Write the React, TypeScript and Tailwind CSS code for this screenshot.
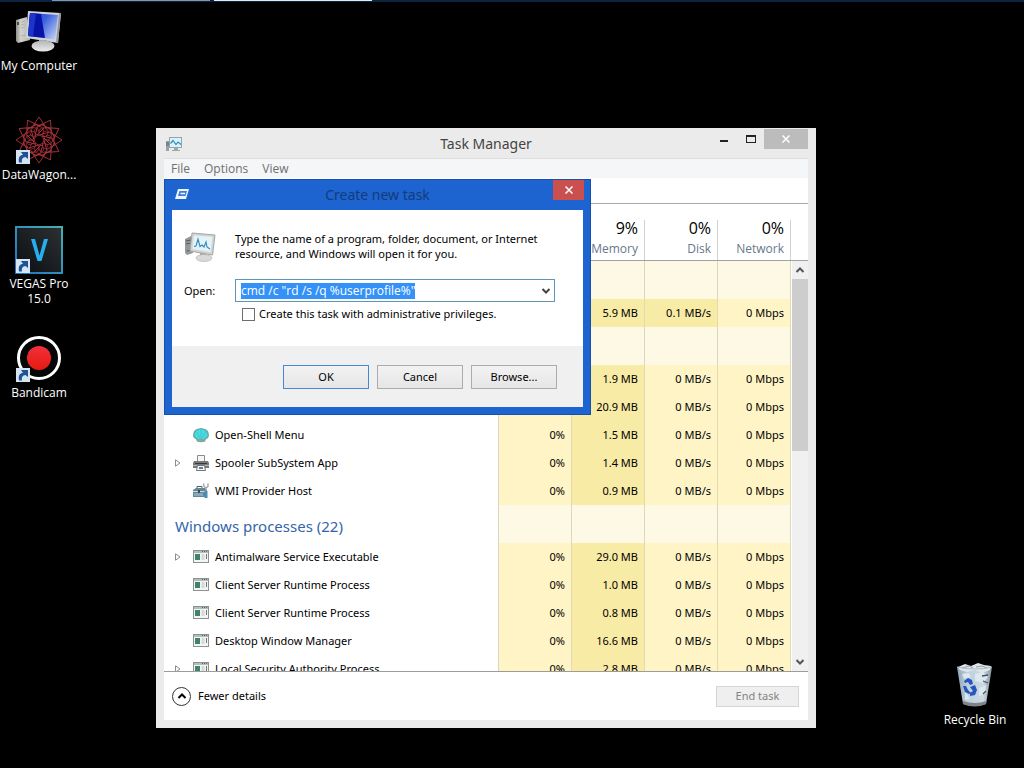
import { FC, ReactNode, useEffect, useRef } from "react";

interface Row {
  name: string;
  group?: boolean;
  expandable?: boolean;
  icon?: "shell" | "printer" | "wmi" | "window";
  cpu?: string;
  memory?: string;
  disk?: string;
  network?: string;
}

const rows: Row[] = [
  { name: "", group: true },
  { name: "", memory: "5.9 MB", disk: "0.1 MB/s" },
  { name: "", group: true },
  { name: "", memory: "1.9 MB" },
  { name: "", memory: "20.9 MB" },
  { name: "Open-Shell Menu", icon: "shell", cpu: "0%", memory: "1.5 MB" },
  { name: "Spooler SubSystem App", icon: "printer", expandable: true, cpu: "0%", memory: "1.4 MB" },
  { name: "WMI Provider Host", icon: "wmi", cpu: "0%", memory: "0.9 MB" },
  { name: "Windows processes (22)", group: true },
  { name: "Antimalware Service Executable", icon: "window", expandable: true, cpu: "0%", memory: "29.0 MB" },
  { name: "Client Server Runtime Process", icon: "window", cpu: "0%", memory: "1.0 MB" },
  { name: "Client Server Runtime Process", icon: "window", cpu: "0%", memory: "0.8 MB" },
  { name: "Desktop Window Manager", icon: "window", cpu: "0%", memory: "16.6 MB" },
  { name: "Local Security Authority Process", icon: "window", expandable: true, cpu: "0%", memory: "2.8 MB" },
];

const ComputerIcon = () => (
  <svg viewBox="0 0 48 48" className="size-12">
    <defs>
      <linearGradient id="screen" x1="0" y1="0.2" x2="1" y2="0.9">
        <stop offset="0" stopColor="#1a3fd0" />
        <stop offset="0.4" stopColor="#3c60dc" />
        <stop offset="1" stopColor="#c4d3f7" />
      </linearGradient>
      <linearGradient id="tower" x1="0" y1="0" x2="1" y2="0">
        <stop offset="0" stopColor="#8f8f8b" />
        <stop offset="0.35" stopColor="#d4d4cf" />
        <stop offset="1" stopColor="#b4b4af" />
      </linearGradient>
      <linearGradient id="stand" x1="0" y1="0" x2="0" y2="1">
        <stop offset="0" stopColor="#b3b5b6" />
        <stop offset="1" stopColor="#eceded" />
      </linearGradient>
    </defs>
    <path d="M1 12 L12 9 L15 32 L3 35 L1 33 Z" fill="url(#tower)" />
    <path d="M2 14h2v3H2z" fill="#4c4c49" />
    <path d="M6 14l4-1M6 17l4-1M6 20l4-1M6 28l5-1" stroke="#a5a5a0" strokeWidth=".7" />
    <path d="M13 3 L46 5 L43 35 L11 30 Z" fill="#cfd3d8" />
    <path d="M43 35 L46 5 L44 5 L41 34.600 Z" fill="#92979d" />
    <path d="M15 5 L43 7 L40 31.500 L13 28 Z" fill="url(#screen)" />
    <path d="M15 5 L26 6 L30 30 L13 28 Z" fill="#0712a8" />
    <path d="M15 5 L21 5.500 L18 28.500 L13 28 Z" fill="#1c35c8" />
    <path d="M24 32h8v5h-8z" fill="#a4a7a9" />
    <ellipse cx="28" cy="38" rx="11.500" ry="5.500" fill="url(#stand)" />
  </svg>
);

const ShortcutArrow = () => (
  <>
    <rect x="1" y="33" width="14" height="14" fill="#d6e4f2" />
    <path d="M4 45.500 C3 40 5 38 8 38 L6 35 L13 35 L13 42 L10.500 40 C7.500 40.500 6.500 42 7 45.500 Z" fill="#1f5296" />
  </>
);

const DataWagonIcon = () => (
  <svg viewBox="0 0 48 48" className="size-12" fill="none">
    {[0, 30, 60, 90, 120, 150, 180, 210, 240, 270, 300, 330].map((a) => (
      <g key={a} transform={`translate(24 23) rotate(${a})`} stroke="#a8323b" strokeWidth=".9">
        <path d="M0 -23 L8 -11 M0 -23 L-8 -11 M-6 -15 L6 -15" />
        <circle cx="0" cy="-9" r="4.500" stroke="#8e2630" />
        <path d="M-2 -5 L5 -12" stroke="#c03a44" />
      </g>
    ))}
    <ShortcutArrow />
  </svg>
);

const VegasIcon = () => (
  <svg viewBox="0 0 48 48" className="size-12">
    <defs>
      <linearGradient id="vegasFrame" x1="0" y1="1" x2="1" y2="0">
        <stop offset="0" stopColor="#1f6fc4" />
        <stop offset="1" stopColor="#45b3b0" />
      </linearGradient>
      <linearGradient id="vegasFill" x1="0" y1="1" x2="1" y2="0">
        <stop offset="0" stopColor="#0b0f12" />
        <stop offset="1" stopColor="#2d3033" />
      </linearGradient>
    </defs>
    <rect x="0" y="0" width="48" height="48" fill="url(#vegasFrame)" />
    <rect x="2" y="2" width="44" height="44" fill="url(#vegasFill)" />
    <path d="M16 13 h4 l4.500 16.500 l4.500 -16.500 h4 l-6.500 22 h-4 z" fill="#27aef0" />
    <ShortcutArrow />
  </svg>
);

const BandicamIcon = () => (
  <svg viewBox="0 0 48 48" className="size-12">
    <defs>
      <linearGradient id="rec" x1="0" y1="0" x2="0" y2="1">
        <stop offset="0" stopColor="#f0303c" />
        <stop offset="1" stopColor="#e81a10" />
      </linearGradient>
    </defs>
    <circle cx="24" cy="23" r="20.500" fill="#050505" stroke="#fff" strokeWidth="3" />
    <circle cx="24" cy="23" r="12" fill="url(#rec)" />
    <ShortcutArrow />
  </svg>
);

const RecycleBinIcon = () => (
  <svg viewBox="0 0 48 48" className="size-12">
    <defs>
      <linearGradient id="bin" x1="0" y1="0" x2="1" y2="0">
        <stop offset="0" stopColor="#8fa5b5" />
        <stop offset="0.3" stopColor="#bed0de" />
        <stop offset="0.75" stopColor="#ccd9e3" />
        <stop offset="1" stopColor="#7f8f9b" />
      </linearGradient>
    </defs>
    <path d="M6 5 L41 5 L35 42 Q24 46 12 42 Z" fill="url(#bin)" />
    <path d="M7 5 L14 2 L20 4 L27 1 L33 3 L40 4 L39 8 L31 11 L24 8 L16 10 L9 8 Z" fill="#dfe6ea" />
    <path d="M11 6 L18 4 L22 6 M25 5 L31 4 L36 6" fill="none" stroke="#8fa0ac" />
    <path d="M24 12 l8 -2 l5 5 l-5 6 l-8 -2z M28 26 l7 -3 l-1 9 l-6 2z M14 29 l5 8 l-5 1z M11 12 l7 -1 l2 4 l-7 2z" fill="#dde7ee" />
    <path d="M31 14 l6 -1 M32 19 l5 2 M32 32 l3 -3" stroke="#43525d" strokeWidth="1.300" />
    <path d="M12 39 Q24 43 35.500 39 L35 42 Q24 47 12 42 Z" fill="#7d8589" />
    <path d="M6 5 Q24 9 41 5" fill="none" stroke="#aebbc4" />
    <g fill="#2756bd">
      <path d="M13 19 l4 -3 l4 2 l1 4 l-3 1 l-2 -3 l-3 1z" />
      <path d="M12 24 l3 0 l2 4 l3 3 l-2 1 l-4 -2z" />
      <path d="M19 25 l5 -2 l2 5 l-2 5 l-5 1 l0 -3 l3 -2z" />
    </g>
  </svg>
);

const DesktopIcon: FC<{ label: string; className: string; children: ReactNode }> = ({ label, className, children }) => (
  <button
    className={`flex flex-col items-center gap-0.5 text-center font-['Open_Sans',sans-serif] text-[12px] leading-[15px] text-white ${className}`}
  >
    {children}
    <span>{label}</span>
  </button>
);

const MonitorIcon: FC<{ className: string }> = ({ className }) => (
  <svg viewBox="0 0 32 32" className={className}>
    <path d="M1 8 L7 5 L9 22 L3 24 L1 22 Z" fill="#94989a" />
    <path d="M2 10l5-1M2 13l5-1M3 20l5-1" stroke="#565b5c" />
    <path d="M8 2 L31 4 L28.500 24 L6 20 Z" fill="#d3d5d3" stroke="#a2a5a2" />
    <path d="M10 4.500 L28.500 6 L26.500 21 L8.500 18 Z" fill="#e4f2fa" />
    <path
      d="M10 15.500 L12 15 L14 8 L16 15.500 L18 14 L20 16 L22 11 L23 16 L26 18"
      fill="none"
      stroke="#2f8bb8"
      strokeWidth="1.100"
    />
    <path d="M16 22h6v4h-6z" fill="#a9aba9" />
    <ellipse cx="20" cy="27" rx="8" ry="3.500" fill="#d9dad8" stroke="#a9aba9" strokeWidth=".6" />
  </svg>
);

const TaskIcon = () => (
  <svg viewBox="0 0 18 16" className="h-4 w-[18px]">
    <path d="M1 5h3v10H1z" fill="#9aa0a4" />
    <path d="M1 7h3M1 9h3" stroke="#5f666b" />
    <rect x="4.500" y="1.500" width="12" height="10" fill="#dff0f8" stroke="#8fa5b0" />
    <path d="M5.500 7.500 L8 4.500 L11 8.500 L13 6 L16 8.500" fill="none" stroke="#2790bf" strokeWidth="1.200" />
    <path d="M9 12h4v2h2v1H7v-1h2z" fill="#9aa7ae" />
  </svg>
);

const RowIcon: FC<{ icon: Row["icon"] }> = ({ icon }) => {
  if (icon === "shell") {
    return (
      <svg viewBox="0 0 16 16" className="size-4">
        <path d="M0 8 Q0 1.500 8 1 Q16 1.500 16 8 Q16 11 13 12 L12 14.500 Q8 16 4 14.500 L3 12 Q0 11 0 8 Z" fill="#63aeb0" />
        <path d="M1.500 8.500 Q2 3 8 2.500 Q14 3 14.500 8.500 L11 12 H5 Z" fill="#45dde4" />
        <path d="M8 13 L3.500 5 M8 13 L8 3 M8 13 L12.500 5" stroke="#43b9b8" strokeWidth=".6" />
        <path d="M3 12 h10 l-1.500 2.500 h-7z" fill="#8aa59c" />
      </svg>
    );
  }
  if (icon === "printer") {
    return (
      <svg viewBox="0 0 16 16" className="size-4">
        <path d="M4.500 .5h7v6h-7z" fill="#f6f6f6" stroke="#8b8b8b" />
        <path d="M1 6h14l1 2v5H0V8z" fill="#77797b" />
        <path d="M2 8h12v1H2z" fill="#36383a" />
        <path d="M0 10h16v1H0z" fill="#b5b7b9" />
        <path d="M4.500 10.500h7l1 5h-9z" fill="#f8f8f8" stroke="#737373" />
        <path d="M6 12h4v2H6z" fill="#5b7e9d" />
      </svg>
    );
  }
  if (icon === "wmi") {
    return (
      <svg viewBox="0 0 16 16" className="size-4">
        <path d="M0 7 L3 5 L12 5 L14 7 L14 14 L0 14 Z" fill="#668696" />
        <path d="M0 8.500h13" stroke="#c9dbe3" />
        <path d="M4 5V3.500h5V5" fill="none" stroke="#4b626e" />
        <path d="M1 10h9v3H1z" fill="#86a8b7" />
        <path d="M5 7h2v3H5z" fill="#384b55" />
        <path d="M10.500 .5 L11 3.500 L13 5 L15 3.500 L15 .5 M13 5v4" stroke="#959fa4" strokeWidth="1.300" fill="none" />
        <path d="M11.500 8h3v7h-3z" fill="#4a8eb6" />
      </svg>
    );
  }
  if (icon === "window") {
    return (
      <svg viewBox="0 0 16 14" className="h-[14px] w-4">
        <rect x=".5" y=".5" width="15" height="12" fill="#f3f5f4" stroke="#8b9390" />
        <path d="M1 1h14v2H1z" fill="#b5bcba" />
        <path d="M9 1.500h1M11 1.500h1M13 1.500h1" stroke="#5f6765" />
        <path d="M2 4h5v6H2z" fill="#3f8272" />
        <path d="M8.500 5h3M8.500 7h3M8.500 9h3" stroke="#b8c0be" />
        <path d="M13.500 4v5" stroke="#6d7573" />
      </svg>
    );
  }
  return null;
};

const Chevron: FC<{ up?: boolean; className: string }> = ({ up, className }) => (
  <svg viewBox="0 0 10 8" className={className} fill="none" stroke="currentColor" strokeWidth="2">
    <path d={up ? "M1.500 6 L5 2.500 L8.500 6" : "M1.500 2 L5 5.500 L8.500 2"} />
  </svg>
);

const Cross = () => (
  <svg viewBox="0 0 8 8" className="size-2" stroke="currentColor" strokeWidth="1.500">
    <path d="M.5 .5 L7.500 7.500 M7.500 .5 L.5 7.500" />
  </svg>
);

const headers = [
  { title: "CPU", value: "" },
  { title: "Memory", value: "9%" },
  { title: "Disk", value: "0%" },
  { title: "Network", value: "0%" },
];

const ProcessRow: FC<{ row: Row }> = ({ row }) => {
  if (row.group) {
    return (
      <tr className="h-[38px]">
        <td className="border-r border-[#dcd6bd] pt-1 pl-[11px] text-[15px] leading-5 text-[#3565a8]">{row.name}</td>
        {headers.map((h) => (
          <td key={h.title} className="border-r border-[#dcd6bd] bg-[#fef9e5]" />
        ))}
      </tr>
    );
  }

  const cells = [
    { key: "cpu", value: row.cpu, hot: false },
    { key: "memory", value: row.memory, hot: true },
    { key: "disk", value: row.disk ?? "0 MB/s", hot: row.disk !== undefined },
    { key: "network", value: row.network ?? "0 Mbps", hot: false },
  ];

  return (
    <tr className="h-7">
      <td className="border-r border-[#dcd6bd]">
        <div className="flex items-center pl-[11px]">
          <span className="w-[18px]">
            {row.expandable && (
              <svg viewBox="0 0 6 8" className="h-2 w-1.5" fill="none" stroke="#8c8c8c">
                <path d="M.5 .8 L5 4 L.5 7.200 Z" />
              </svg>
            )}
          </span>
          <RowIcon icon={row.icon} />
          <span className="pl-1.5 whitespace-nowrap">{row.name}</span>
        </div>
      </td>
      {cells.map((c) => (
        <td
          key={c.key}
          className={`border-r border-[#e2dab0] pr-1.5 text-right whitespace-nowrap ${c.hot ? "bg-[#f8eba5]" : "bg-[#fef4c6]"}`}
        >
          {c.value}
        </td>
      ))}
    </tr>
  );
};

const CreateTaskDialog = () => {
  const inputRef = useRef<HTMLInputElement>(null);

  useEffect(() => {
    inputRef.current?.focus();
    inputRef.current?.select();
  }, []);

  const button = "h-6 w-[86px] border bg-gradient-to-b from-[#f2f2f2] to-[#e6e6e6]";

  return (
    <section
      role="dialog"
      aria-labelledby="dialog-title"
      className="absolute top-[51px] left-2 w-[427px] border border-[#164fae] bg-[#1d64d0] px-[7px] pb-[7px]"
    >
      <header className="flex h-[30px] items-start">
        <svg viewBox="0 0 16 12" className="mt-2 ml-[2px] h-3 w-4">
          <path d="M4 1 L15 1 L12 11 L1 11 Z" fill="#eef5ff" />
          <path d="M5.500 3 L13 3 L11.500 8 L4 8 Z" fill="#3c7ddc" />
          <path d="M6.500 5.500 h4.500" stroke="#eef5ff" strokeWidth="1.500" />
        </svg>
        <h2 id="dialog-title" className="flex-1 pt-[5px] pl-3 text-center text-[14px] leading-5 text-[#123c7c]">
          Create new task
        </h2>
        <button aria-label="Close" className="-mr-px flex h-5 w-[31px] items-center justify-center bg-[#c9504f] text-white">
          <Cross />
        </button>
      </header>
      <form onSubmit={(e) => e.preventDefault()}>
        <div className="grid grid-cols-[51px_1fr] bg-white pt-[21px] pr-7 pb-6 pl-3">
          <MonitorIcon className="size-8" />
          <p className="leading-[15px]">
            Type the name of a program, folder, document, or Internet
            <br />
            resource, and Windows will open it for you.
          </p>
          <label htmlFor="command" className="mt-4 leading-[23px]">
            Open:
          </label>
          <div className="mt-4 flex h-[23px] border border-[#5f95b8] bg-white">
            <input
              id="command"
              ref={inputRef}
              defaultValue={'cmd /c "rd /s /q %userprofile%"'}
              className="min-w-0 flex-1 pl-[5px] font-['Open_Sans',sans-serif] text-[12px] leading-4 outline-none selection:bg-[#3391f8] selection:text-white"
            />
            <button type="button" aria-label="Show recent commands" className="flex w-4 items-center justify-center text-[#444]">
              <Chevron className="h-2 w-2.5" />
            </button>
          </div>
          <label className="col-start-2 mt-1 flex items-center gap-1 pl-[7px] leading-4">
            <input type="checkbox" className="size-[13px] appearance-none border border-[#6e6e6e] bg-white" />
            Create this task with administrative privileges.
          </label>
        </div>
        <div className="flex justify-end gap-2 bg-[#f0f0f0] pt-[19px] pr-[26px] pb-[18px]">
          <button className={`${button} border-[#4389d6]`}>OK</button>
          <button type="button" className={`${button} border-[#acacac]`}>
            Cancel
          </button>
          <button type="button" className={`${button} border-[#acacac]`}>
            Browse...
          </button>
        </div>
      </form>
    </section>
  );
};

const TaskManager = () => (
  <main className="absolute top-32 right-52 bottom-10 left-39 flex flex-col bg-[#ebebeb] px-2 pb-2">
    <header className="flex h-[30px] shrink-0 items-start">
      <div className="w-[98px] pt-2 pl-px">
        <TaskIcon />
      </div>
      <h1 className="flex-1 pt-1.5 text-center text-[14px] leading-5 text-[#444]">Task Manager</h1>
      <div className="flex pt-px">
        <button aria-label="Minimize" className="flex h-5 w-[27px] items-center justify-center pt-1">
          <span className="h-0.5 w-2 bg-[#222]" />
        </button>
        <button aria-label="Maximize" className="flex h-5 w-[27px] items-center justify-center">
          <span className="h-2 w-2.5 border border-t-2 border-[#222]" />
        </button>
        <button aria-label="Close" className="flex h-5 w-[44px] items-center justify-center bg-[#bcbcbc] text-white">
          <Cross />
        </button>
      </div>
    </header>
    <div className="flex min-h-0 flex-1 flex-col bg-white">
      <nav className="flex h-5 shrink-0 items-center gap-3.5 border-t border-[#dedede] bg-[#f5f6f7] pl-[7px] font-['Open_Sans',sans-serif] text-[12px] text-[#6f6f6f]">
        <button>File</button>
        <button>Options</button>
        <button>View</button>
      </nav>
      <div className="h-[26px] shrink-0 border-b border-[#a5a9ad]" />
      <div className="flex min-h-0 flex-1 overflow-hidden border-b border-[#9c9c9c]">
        <div className="min-w-0 flex-1">
          <table className="w-full table-fixed border-separate border-spacing-0">
            <colgroup>
              <col />
              <col className="w-[73px]" />
              <col className="w-[73px]" />
              <col className="w-[73px]" />
              <col className="w-[73px]" />
            </colgroup>
            <thead className="font-['Open_Sans',sans-serif]">
              <tr className="h-[57px]">
                <th className="border-b border-[#9ea3a8] pb-1 pl-[11px] text-left align-bottom font-normal">Name</th>
                {headers.map((h) => (
                  <th key={h.title} className="border-b border-[#9ea3a8] pt-4 text-right align-top font-normal">
                    <div className="h-10 border-r border-[#d0d0d0] pr-1.5">
                      <div className="h-4 text-[16px] leading-4">{h.value}</div>
                      <div className="pt-[5px] text-[12px] leading-4 text-[#66788a]">{h.title}</div>
                    </div>
                  </th>
                ))}
              </tr>
            </thead>
            <tbody>
              {rows.map((row, i) => (
                <ProcessRow key={i} row={row} />
              ))}
            </tbody>
          </table>
        </div>
        <div className="flex w-[17px] shrink-0 flex-col">
          <div className="h-[57px] shrink-0 border-b border-[#9ea3a8]" />
          <div className="ml-px flex min-h-0 flex-1 flex-col items-center bg-[#f0f0f0] text-[#555]">
            <button aria-label="Scroll up" className="flex h-[18px] w-full items-center justify-center">
              <Chevron up className="h-2 w-2.5" />
            </button>
            <div className="h-[42%] w-full bg-[#cdcdcd]" />
            <button aria-label="Scroll down" className="mt-auto flex h-[18px] w-full items-center justify-center">
              <Chevron className="h-2 w-2.5" />
            </button>
          </div>
        </div>
      </div>
      <footer className="flex h-12 shrink-0 items-center justify-between pr-[9px] pl-2">
        <button className="flex items-center gap-[7px]">
          <span className="flex size-[19px] items-center justify-center rounded-full border border-[#333]">
            <Chevron up className="h-2 w-2.5" />
          </span>
          Fewer details
        </button>
        <button disabled className="h-[21px] w-[83px] border border-[#d5d5d5] bg-[#efefef] text-[#838383]">
          End task
        </button>
      </footer>
    </div>
    <CreateTaskDialog />
  </main>
);

const App = () => (
  <div className="relative h-screen overflow-hidden bg-black font-['Noto_Sans',sans-serif] text-[11px] text-black">
    <div className="flex h-0.5 gap-1 bg-[#0b2340] pl-[52px]">
      <span className="h-px w-[158px] bg-[#8793a6]" />
      <span className="h-px w-[158px] bg-[#e6ebee]" />
    </div>
    <div className="flex w-[78px] flex-col pt-1.5">
      <DesktopIcon label="My Computer" className="h-[109px] whitespace-nowrap">
        <ComputerIcon />
      </DesktopIcon>
      <DesktopIcon label="DataWagon..." className="h-[109px] whitespace-nowrap">
        <DataWagonIcon />
      </DesktopIcon>
      <DesktopIcon label="VEGAS Pro 15.0" className="h-[109px] px-1">
        <VegasIcon />
      </DesktopIcon>
      <DesktopIcon label="Bandicam" className="h-[109px] whitespace-nowrap">
        <BandicamIcon />
      </DesktopIcon>
    </div>
    <TaskManager />
    <DesktopIcon label="Recycle Bin" className="absolute right-0 bottom-[41px] w-[98px]">
      <RecycleBinIcon />
    </DesktopIcon>
  </div>
);

export default App;
